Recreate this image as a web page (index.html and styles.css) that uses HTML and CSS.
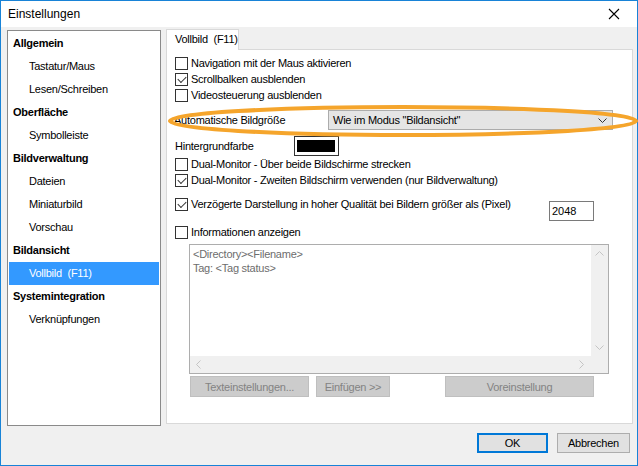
FILE: index.html
```html
<!DOCTYPE html>
<html lang="de">
<head>
    <meta charset="UTF-8">
    <title>Einstellungen</title>
    <link rel="stylesheet" href="styles.css">
</head>
<body>
    <div class="window">
        <div class="titlebar">
            <span class="title">Einstellungen</span>
            <svg class="close" width="12" height="12" viewBox="0 0 12 12">
                <path d="M1 1 L11 11 M11 1 L1 11" stroke="#000" stroke-width="1.1" fill="none"/>
            </svg>
        </div>

        <div class="main">
            <ul class="nav">
                <li class="group">Allgemein</li>
                <li class="item">Tastatur/Maus</li>
                <li class="item">Lesen/Schreiben</li>
                <li class="group">Oberfläche</li>
                <li class="item">Symbolleiste</li>
                <li class="group">Bildverwaltung</li>
                <li class="item">Dateien</li>
                <li class="item">Miniaturbild</li>
                <li class="item">Vorschau</li>
                <li class="group">Bildansicht</li>
                <li class="item selected">Vollbild&nbsp; (F11)</li>
                <li class="group">Systemintegration</li>
                <li class="item">Verknüpfungen</li>
            </ul>

            <div class="tabs">
                <div class="tab">Vollbild&nbsp; (F11)</div>
                <div class="panel">
                    <div class="check"><span class="box"></span>Navigation mit der Maus aktivieren</div>
                    <div class="check"><span class="box checked"></span>Scrollbalken ausblenden</div>
                    <div class="check"><span class="box"></span>Videosteuerung ausblenden</div>

                    <div class="field-row">
                        <span class="field-label size-label">Automatische Bildgröße</span>
                        <div class="combo">
                            <span>Wie im Modus "Bildansicht"</span>
                            <svg width="9" height="5" viewBox="0 0 9 5">
                                <path d="M0.5 0.5 L4.5 4.5 L8.5 0.5" stroke="#333" stroke-width="1" fill="none"/>
                            </svg>
                        </div>
                    </div>

                    <div class="field-row color-row">
                        <span class="field-label color-label">Hintergrundfarbe</span>
                        <div class="swatch"><div class="swatch-fill"></div></div>
                    </div>

                    <div class="check"><span class="box"></span>Dual-Monitor - Über beide Bildschirme strecken</div>
                    <div class="check"><span class="box checked"></span>Dual-Monitor - Zweiten Bildschirm verwenden (nur Bildverwaltung)</div>

                    <div class="quality-row">
                        <div class="check"><span class="box checked"></span>Verzögerte Darstellung in hoher Qualität bei Bildern größer als (Pixel)</div>
                        <div class="number">2048</div>
                    </div>

                    <div class="check info-check"><span class="box"></span>Informationen anzeigen</div>

                    <div class="memo">
                        <div class="memo-text">&lt;Directory&gt;&lt;Filename&gt;<br>Tag: &lt;Tag status&gt;</div>
                        <div class="vscroll">
                            <svg width="9" height="5" viewBox="0 0 9 5"><path d="M0.5 4.5 L4.5 0.5 L8.5 4.5" stroke="#c4c4c4" fill="none"/></svg>
                            <svg width="9" height="5" viewBox="0 0 9 5"><path d="M0.5 0.5 L4.5 4.5 L8.5 0.5" stroke="#c4c4c4" fill="none"/></svg>
                        </div>
                        <div class="hscroll">
                            <svg width="5" height="9" viewBox="0 0 5 9"><path d="M4.5 0.5 L0.5 4.5 L4.5 8.5" stroke="#c4c4c4" fill="none"/></svg>
                            <svg width="5" height="9" viewBox="0 0 5 9"><path d="M0.5 0.5 L4.5 4.5 L0.5 8.5" stroke="#c4c4c4" fill="none"/></svg>
                        </div>
                        <div class="corner"></div>
                    </div>

                    <div class="memo-buttons">
                        <button class="btn disabled text-btn">Texteinstellungen...</button>
                        <button class="btn disabled insert-btn">Einfügen &gt;&gt;</button>
                        <button class="btn disabled default-btn">Voreinstellung</button>
                    </div>
                </div>
            </div>
        </div>

        <div class="footer">
            <button class="btn ok">OK</button>
            <button class="btn cancel">Abbrechen</button>
        </div>

        <svg class="highlight" width="638" height="466" viewBox="0 0 638 466">
            <ellipse cx="403" cy="121" rx="233" ry="14" fill="none" stroke="#f5a52c" stroke-width="4"/>
        </svg>
    </div>
</body>
</html>
```

FILE: styles.css
```css
body {
    margin: 0;
    font-family: "Liberation Sans", Arial, sans-serif;
    font-size: 11px;
    letter-spacing: -0.25px;
    color: #000;
}

.window {
    position: relative;
    width: 638px;
    height: 466px;
    box-sizing: border-box;
    border: 1px solid #1883d7;
    background-color: #f0f0f0;
    display: flex;
    flex-direction: column;
}

.titlebar {
    height: 26px;
    background-color: #fff;
    display: flex;
    align-items: center;
    justify-content: space-between;
    padding: 0 17px 0 7px;
}

.title {
    font-size: 12px;
    letter-spacing: 0;
}

.main {
    display: flex;
    gap: 5px;
    padding: 3px 0 0 6px;
}

/* left navigation */
.nav {
    width: 154px;
    height: 396px;
    box-sizing: border-box;
    margin: 0;
    padding: 1px 0 0 0;
    list-style: none;
    background-color: #fff;
    border: 1px solid #8a8a8a;
}

.nav li {
    height: 23px;
    line-height: 23px;
    margin: 0 1px;
    white-space: nowrap;
}

.nav .group {
    font-weight: bold;
    padding-left: 4px;
}

.nav .item {
    padding-left: 20px;
}

.nav .selected {
    background-color: #3399ff;
    color: #fff;
}

/* tab page */
.tabs {
    width: 467px;
    display: flex;
    flex-direction: column;
    margin-top: -1px;
}

.tab {
    position: relative;
    z-index: 1;
    width: 73px;
    height: 21px;
    box-sizing: border-box;
    margin-bottom: -1px;
    padding-left: 8px;
    line-height: 19px;
    white-space: nowrap;
    background-color: #fff;
    border: 1px solid #d9d9d9;
    border-bottom: none;
}

.panel {
    height: 375px;
    box-sizing: border-box;
    padding: 5px 0 0 8px;
    background-color: #fff;
    border: 1px solid #d9d9d9;
}

.check {
    height: 16px;
    display: flex;
    align-items: center;
    white-space: nowrap;
}

.box {
    position: relative;
    width: 13px;
    height: 13px;
    box-sizing: border-box;
    margin-right: 3px;
    border: 1px solid #333;
    background-color: #fff;
    flex-shrink: 0;
}

.box.checked::after {
    content: "";
    position: absolute;
    left: 2px;
    top: 2px;
    width: 7px;
    height: 4px;
    border-left: 1px solid #333;
    border-bottom: 1px solid #333;
    transform: rotate(-45deg);
}

.field-row {
    height: 20px;
    display: flex;
    align-items: center;
    margin-top: 7px;
}

.size-label {
    width: 154px;
    margin-left: -1px;
}

.color-row {
    margin-top: 6px;
}

.color-label {
    width: 119px;
}

.combo {
    width: 285px;
    height: 20px;
    box-sizing: border-box;
    display: flex;
    align-items: center;
    justify-content: space-between;
    padding: 0 5px 0 4px;
    background-color: #e5e5e5;
    border: 1px solid #acacac;
}

.swatch {
    width: 45px;
    height: 20px;
    box-sizing: border-box;
    padding: 3px 3px 3px 2px;
    border: 1px solid #333;
    background-color: #fff;
}

.swatch-fill {
    height: 100%;
    background-color: #000;
}

.quality-row {
    display: flex;
    justify-content: space-between;
    align-items: flex-start;
    margin-top: 8px;
    padding-right: 38px;
}

.number {
    width: 45px;
    height: 20px;
    box-sizing: border-box;
    margin-top: 5px;
    padding-left: 2px;
    line-height: 18px;
    letter-spacing: 0;
    border: 1px solid #7a7a7a;
}

.info-check {
    margin-top: 3px;
}

/* info text box */
.memo {
    width: 420px;
    height: 130px;
    box-sizing: border-box;
    margin: 4px 0 0 14px;
    border: 1px solid #adadad;
    display: grid;
    grid-template-columns: 1fr 17px;
    grid-template-rows: 1fr 17px;
}

.memo-text {
    padding: 2px 3px;
    line-height: 14px;
    color: #6d6d6d;
}

.vscroll {
    background-color: #f0f0f0;
    display: flex;
    flex-direction: column;
    justify-content: space-between;
    align-items: center;
    padding: 6px 0;
}

.hscroll {
    background-color: #f0f0f0;
    display: flex;
    justify-content: space-between;
    align-items: center;
    padding: 0 7px 0 6px;
}

.corner {
    background-color: #f0f0f0;
}

.memo-buttons {
    display: flex;
    margin: 2px 0 0 15px;
}

.btn {
    height: 21px;
    box-sizing: border-box;
    padding: 0;
    font-family: "Liberation Sans", Arial, sans-serif;
    font-size: 11px;
    letter-spacing: -0.25px;
    background-color: #e1e1e1;
    border: 1px solid #adadad;
    color: #000;
}

.btn.disabled {
    background-color: #cccccc;
    border-color: #bfbfbf;
    color: #838383;
}

.text-btn {
    width: 119px;
}

.insert-btn {
    width: 74px;
    margin-left: 7px;
}

.default-btn {
    width: 149px;
    margin-left: 55px;
}

/* dialog buttons */
.footer {
    display: flex;
    justify-content: flex-end;
    gap: 9px;
    padding: 7px 7px 0 0;
}

.footer .btn {
    height: 20px;
}

.ok {
    width: 71px;
    border: 2px solid #0078d7;
}

.cancel {
    width: 73px;
}

.highlight {
    position: absolute;
    top: -1px;
    left: -1px;
    pointer-events: none;
}
```
